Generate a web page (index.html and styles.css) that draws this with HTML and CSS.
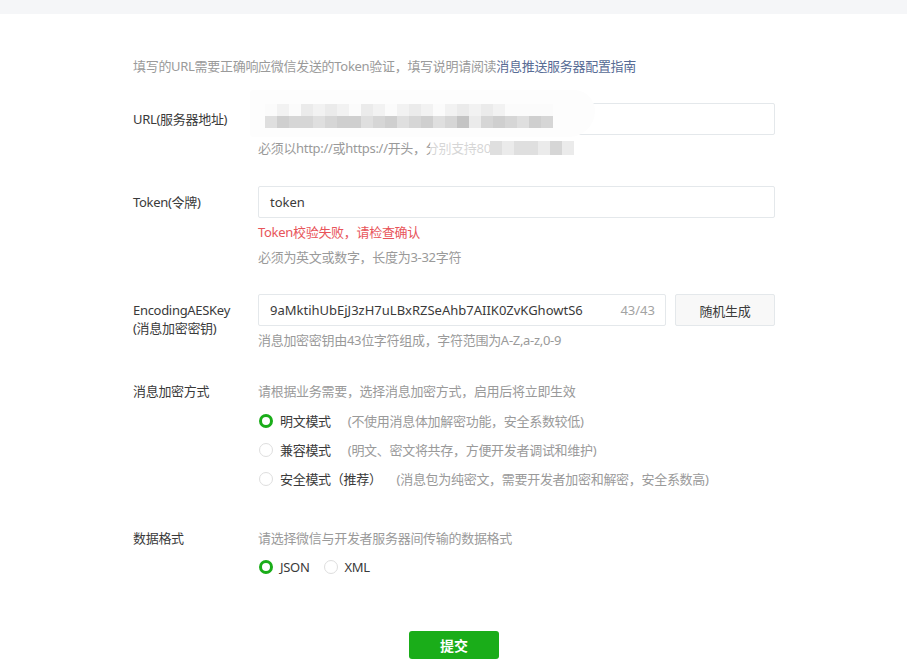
FILE: index.html
```html
<!DOCTYPE html>
<html lang="zh-CN">
<head>
<meta charset="utf-8">
<title>服务器配置</title>
<link rel="stylesheet" href="styles.css">
</head>
<body>
<div class="topbar"></div>
<main class="page">
  <p class="intro">填写的URL需要正确响应微信发送的Token验证，填写说明请阅读<a class="link" href="#">消息推送服务器配置指南</a></p>

  <div class="row row-url">
    <div class="label">URL(服务器地址)</div>
    <div class="field">
      <div class="input"></div>
      <p class="hint">必须以http://或https://开头，分别支持80端口和443端口</p>
      <div class="veil"></div>
      <div class="mosaic mosaic-input">
        <span class="c0"></span><span class="c1"></span><span class="c0"></span><span class="c2"></span><span class="c1"></span><span class="c2"></span><span class="c1"></span><span class="c0"></span><span class="c2"></span><span class="c1"></span><span class="c0"></span><span class="c1"></span><span class="c2"></span><span class="c1"></span><span class="c0"></span><span class="c1"></span><span class="c2"></span><span class="c1"></span><span class="c2"></span><span class="c1"></span><span class="c0"></span><span class="c0"></span><span class="c0"></span><span class="c0"></span>
        <span class="c3"></span><span class="c5"></span><span class="c4"></span><span class="c4"></span><span class="c3"></span><span class="c4"></span><span class="c5"></span><span class="c5"></span><span class="c3"></span><span class="c4"></span><span class="c5"></span><span class="c3"></span><span class="c4"></span><span class="c5"></span><span class="c3"></span><span class="c4"></span><span class="c6"></span><span class="c2"></span><span class="c4"></span><span class="c5"></span><span class="c4"></span><span class="c3"></span><span class="c5"></span><span class="c4"></span>
      </div>
      <div class="mosaic mosaic-hint">
        <span class="cf"></span><span class="c3"></span><span class="c2"></span><span class="c3"></span><span class="c3"></span><span class="c2"></span><span class="c4"></span><span class="c2"></span><span class="cw"></span>
      </div>
    </div>
  </div>

  <div class="row row-token">
    <div class="label">Token(令牌)</div>
    <div class="field">
      <div class="input"><span class="value">token</span></div>
      <p class="error">Token校验失败，请检查确认</p>
      <p class="hint">必须为英文或数字，长度为3-32字符</p>
    </div>
  </div>

  <div class="row row-aes">
    <div class="label">EncodingAESKey<br>(消息加密密钥)</div>
    <div class="field">
      <div class="inline">
        <div class="input input-key"><span class="value">9aMktihUbEjJ3zH7uLBxRZSeAhb7AIIK0ZvKGhowtS6</span><span class="count">43/43</span></div>
        <button class="btn-default" type="button">随机生成</button>
      </div>
      <p class="hint">消息加密密钥由43位字符组成，字符范围为A-Z,a-z,0-9</p>
    </div>
  </div>

  <div class="row row-mode">
    <div class="label label-text">消息加密方式</div>
    <div class="field">
      <p class="hint hint-first">请根据业务需要，选择消息加密方式，启用后将立即生效</p>
      <div class="radios">
        <label class="radio"><span class="dot checked"></span><span class="rtext">明文模式</span><span class="note">(不使用消息体加解密功能，安全系数较低)</span></label>
        <label class="radio"><span class="dot"></span><span class="rtext">兼容模式</span><span class="note">(明文、密文将共存，方便开发者调试和维护)</span></label>
        <label class="radio"><span class="dot"></span><span class="rtext">安全模式（推荐）</span><span class="note note-tight">(消息包为纯密文，需要开发者加密和解密，安全系数高)</span></label>
      </div>
    </div>
  </div>

  <div class="row row-format">
    <div class="label label-text">数据格式</div>
    <div class="field">
      <p class="hint hint-first">请选择微信与开发者服务器间传输的数据格式</p>
      <div class="radio-inline">
        <label class="radio"><span class="dot checked"></span><span class="rtext">JSON</span></label>
        <label class="radio"><span class="dot"></span><span class="rtext">XML</span></label>
      </div>
    </div>
  </div>

  <div class="actions">
    <button class="btn-primary" type="button">提交</button>
  </div>
</main>
</body>
</html>
```

FILE: styles.css
```css
* { box-sizing: border-box; }

html, body {
  margin: 0;
  padding: 0;
  background: #ffffff;
}

body {
  font-family: "Noto Sans", "Noto Sans CJK SC", sans-serif;
  font-size: 13px;
  letter-spacing: -0.3px;
  color: #3a3a3a;
}

p { margin: 0; }

.topbar {
  height: 14px;
  background: #f5f6f8;
}

.page {
  padding: 40px 0 0 133px;
}

.intro {
  line-height: 24px;
  color: #9a9a9a;
  margin-bottom: 25px;
}

.link {
  color: #576b95;
  text-decoration: none;
}

.row {
  display: flex;
}

.label {
  width: 125px;
  flex: none;
  padding-top: 7px;
  line-height: 18px;
  color: #3a3a3a;
}

.label-text {
  padding-top: 3px;
}

.field {
  position: relative;
  width: 517px;
}

.row-url { margin-bottom: 26px; }
.row-token { margin-bottom: 25px; }
.row-aes { margin-bottom: 27px; }
.row-mode { margin-bottom: 33px; }
.row-format { margin-bottom: 50px; }

.input {
  height: 32px;
  border: 1px solid #e4e8eb;
  border-radius: 2px;
  display: flex;
  align-items: center;
  padding: 0 10px 0 11px;
  background: #fff;
}

.value {
  color: #3a3a3a;
  flex: 1;
  letter-spacing: 0;
}

.inline {
  display: flex;
  gap: 9px;
}

.input-key {
  width: 408px;
}

.count {
  color: #a3a3a3;
  letter-spacing: 0;
}

.btn-default {
  width: 100px;
  height: 32px;
  border: 1px solid #e4e8eb;
  border-radius: 2px;
  background: #f8f8f8;
  color: #3a3a3a;
  font-family: inherit;
  font-size: 13px;
  letter-spacing: -0.3px;
  padding: 0;
}

.hint {
  line-height: 24px;
  color: #9a9a9a;
  margin-top: 1px;
}

.row-aes .hint { margin-top: 2px; }

.hint-first { margin-top: 0; }

.error {
  line-height: 24px;
  color: #e8545a;
  margin-top: 2px;
}

.radios {
  margin-top: 3px;
}

.radio {
  display: flex;
  align-items: center;
  height: 29px;
  padding-left: 1px;
}

.radio-inline {
  display: flex;
  gap: 13px;
  margin-top: 3px;
}

.radio-inline .radio { height: 28px; }

.dot {
  width: 14px;
  height: 14px;
  border-radius: 50%;
  border: 1px solid #dedede;
  background: #fff;
  margin-right: 7px;
  flex: none;
}

.dot.checked {
  border: 3px solid #1aad19;
}

.rtext { color: #3a3a3a; }

.note {
  color: #9a9a9a;
  margin-left: 17px;
}

.note-tight { margin-left: 15px; }

.actions {
  padding-left: 276px;
}

.btn-primary {
  width: 90px;
  height: 28px;
  border: none;
  border-radius: 3px;
  background: #1aad19;
  color: #fff;
  font-family: inherit;
  font-size: 14px;
  font-weight: bold;
  padding: 0;
}

/* privacy mosaic over the URL */
.veil {
  position: absolute;
  left: -8px;
  top: -13px;
  width: 345px;
  height: 47px;
  background: #fdfdfd;
  border-radius: 4px 24px 30px 4px;
}

.mosaic {
  position: absolute;
  display: grid;
}

.mosaic-input {
  left: 7px;
  top: 1px;
  grid-template-columns: repeat(24, 12px);
  grid-auto-rows: 12px;
}

.mosaic-hint {
  left: 172px;
  top: 38px;
  grid-template-columns: 60px repeat(7, 12px) 40px;
  grid-auto-rows: 14px;
}

.c0 { background: #fbfbfb; }
.c1 { background: #f2f2f2; }
.c2 { background: #ebebeb; }
.c3 { background: #dfdfdf; }
.c4 { background: #d6d6d6; }
.c5 { background: #cfcfcf; }
.c6 { background: #c4c4c4; }
.cw { background: #ffffff; }
.cf { background: rgba(255, 255, 255, 0.6); }
```
